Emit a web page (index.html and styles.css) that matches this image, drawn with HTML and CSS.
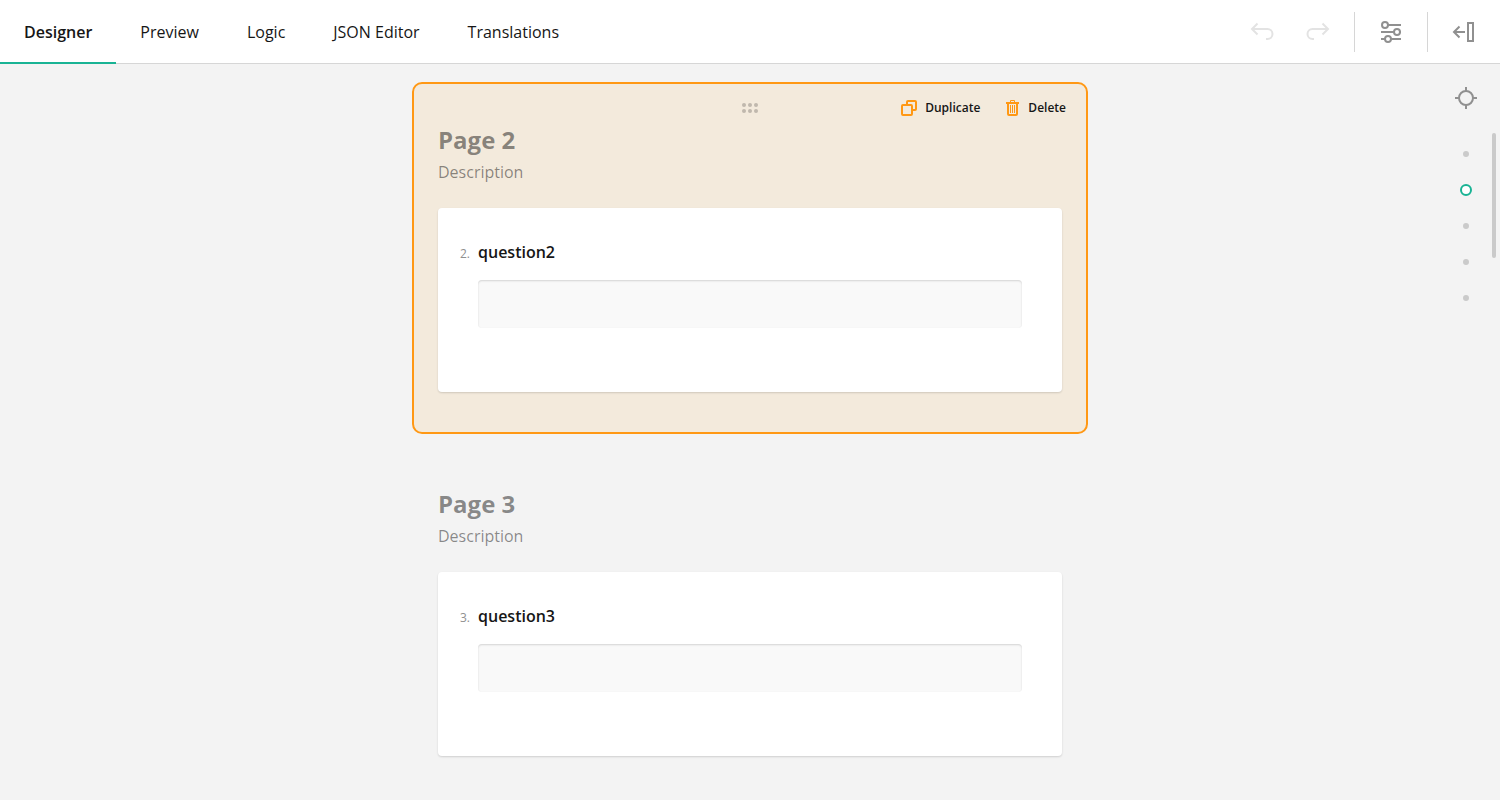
FILE: index.html
```html
<!DOCTYPE html>
<html lang="en">
<head>
<meta charset="utf-8">
<title>Survey Designer</title>
<link rel="stylesheet" href="styles.css">
</head>
<body>
<div class="app">
  <header class="topbar">
    <nav class="tabs">
      <a class="tab tab-active" href="#designer">Designer</a>
      <a class="tab" href="#preview">Preview</a>
      <a class="tab" href="#logic">Logic</a>
      <a class="tab" href="#json">JSON Editor</a>
      <a class="tab" href="#translations">Translations</a>
    </nav>
    <div class="toolbar">
      <button class="tool" type="button" aria-label="Undo" disabled>
        <svg class="icon" viewBox="0 0 24 24"><path d="M7.500 3.500L2 9l5.500 5.500M2 9h15.500a5 5 0 0 1 0 10H16"/></svg>
      </button>
      <button class="tool" type="button" aria-label="Redo" disabled>
        <svg class="icon" viewBox="0 0 24 24"><path d="M16.500 3.500L22 9l-5.500 5.500M22 9H6.500a5 5 0 0 0 0 10H8"/></svg>
      </button>
      <span class="divider"></span>
      <button class="tool" type="button" aria-label="Survey settings">
        <svg class="icon" viewBox="0 0 24 24"><circle cx="6" cy="5" r="3"/><circle cx="18" cy="12" r="3"/><circle cx="9" cy="19" r="3"/><path d="M9 5h13M2 12h13M21 12h1M2 19h4M12 19h10"/></svg>
      </button>
      <span class="divider"></span>
      <button class="tool" type="button" aria-label="Show panel">
        <svg class="icon" viewBox="0 0 24 24"><path d="M7.500 6.500L2 12l5.500 5.500M2 12h11M16 3h5v18h-5z"/></svg>
      </button>
    </div>
  </header>
  <main class="canvas">
    <div class="pages">
      <section class="page page-selected">
        <button class="drag" type="button" aria-label="Drag page">
          <svg class="drag-icon" viewBox="0 0 16 10"><circle cx="2" cy="2" r="2"/><circle cx="8" cy="2" r="2"/><circle cx="14" cy="2" r="2"/><circle cx="2" cy="8" r="2"/><circle cx="8" cy="8" r="2"/><circle cx="14" cy="8" r="2"/></svg>
        </button>
        <div class="actions">
          <button class="action" type="button">
            <svg class="action-icon" viewBox="0 0 16 16"><rect x="1" y="5" width="10" height="10" rx="1"/><path d="M6 5V2a1 1 0 0 1 1-1h7a1 1 0 0 1 1 1v7a1 1 0 0 1-1 1h-3"/></svg>
            Duplicate
          </button>
          <button class="action" type="button">
            <svg class="action-icon" viewBox="0 0 16 16"><path d="M2 3h13M4 3v11a1 1 0 0 0 1 1h7a1 1 0 0 0 1-1V3"/><path class="thin" d="M6.500 2V.500h4V2M6.500 5v8M8.500 5v8M10.500 5v8"/></svg>
            Delete
          </button>
        </div>
        <h2 class="page-title">Page 2</h2>
        <p class="page-description">Description</p>
        <div class="question">
          <span class="number">2.</span>
          <label class="question-title" for="q2">question2</label>
          <input class="answer" id="q2" type="text">
        </div>
      </section>
      <section class="page">
        <h2 class="page-title">Page 3</h2>
        <p class="page-description">Description</p>
        <div class="question">
          <span class="number">3.</span>
          <label class="question-title" for="q3">question3</label>
          <input class="answer" id="q3" type="text">
        </div>
      </section>
    </div>
    <nav class="navigator" aria-label="Pages">
      <button class="target" type="button" aria-label="Go to selected">
        <svg class="icon" viewBox="0 0 24 24"><circle cx="12" cy="12" r="7"/><path d="M12 1v4M12 19v4M1 12h4M19 12h4"/></svg>
      </button>
      <a class="stop" href="#p1" aria-label="Page 1"></a>
      <a class="stop stop-active" href="#p2" aria-label="Page 2"></a>
      <a class="stop" href="#p3" aria-label="Page 3"></a>
      <a class="stop" href="#p4" aria-label="Page 4"></a>
      <a class="stop" href="#p5" aria-label="Page 5"></a>
    </nav>
    <div class="scroll-thumb"></div>
  </main>
</div>
</body>
</html>
```
FILE: styles.css
```css
* { box-sizing: border-box; }
body { margin: 0; font: 16px/24px "Open Sans", sans-serif; color: #161616; }
button { padding: 0; border: 0; background: none; font: inherit; color: inherit; cursor: pointer; }
svg { display: block; fill: none; stroke: currentColor; stroke-width: 2; }
.app { display: flex; flex-direction: column; height: 100vh; background: #f3f3f3; }
.topbar { display: flex; justify-content: space-between; height: 64px; flex: none; background: #fff; box-shadow: inset 0 -1px #d6d6d6; }
.tabs { display: flex; }
.tab { padding: 20px 24px 18px; color: inherit; text-decoration: none; border-bottom: 2px solid transparent; }
.tab-active { font-weight: 600; border-bottom-color: #19b394; }
.toolbar { display: flex; align-items: center; padding-right: 8px; }
.tool { padding: 16px; color: #909090; }
.tool:disabled { color: #e3e3e3; }
.icon { width: 24px; height: 24px; }
.divider { width: 1px; height: 40px; margin: 0 8px; background: #d6d6d6; }
.canvas { position: relative; flex: 1; min-height: 0; overflow: hidden; }
.pages { display: flex; flex-direction: column; gap: 12px; width: 100%; max-width: 676px; margin: 0 auto; padding-top: 18px; }
.page { position: relative; padding: 40px 24px; border: 2px solid transparent; border-radius: 10px; }
.page-selected { background: #f3eadc; border-color: #ff9814; }
.drag { position: absolute; top: 19px; left: 50%; transform: translateX(-50%); }
.drag-icon { width: 16px; height: 10px; fill: #c0b8ad; stroke: none; }
.actions { position: absolute; top: 12px; right: 20px; display: flex; gap: 24px; }
.action { display: flex; align-items: center; gap: 8px; font-size: 12px; font-weight: 600; line-height: 24px; }
.action-icon { width: 16px; height: 16px; color: #ff9814; }
.thin { stroke-width: 1; }
.page-title { margin: 0; font-size: 24px; line-height: 32px; font-weight: 700; color: rgba(0, 0, 0, 0.45); }
.page-description { margin: 4px 0 24px; color: rgba(0, 0, 0, 0.45); }
.question { display: grid; grid-template-columns: 32px 1fr; align-items: baseline; column-gap: 8px; row-gap: 16px; padding: 32px 40px 64px 0; border-radius: 4px; background: #fff; box-shadow: 0 1px 2px rgba(0, 0, 0, 0.15); }
.number { font-size: 12px; line-height: 16px; text-align: right; color: #909090; }
.question-title { font-weight: 600; }
.answer { grid-column: 2; width: 100%; height: 48px; padding: 12px 16px; border: 0; border-radius: 4px; background: #f9f9f9; box-shadow: inset 0 1px 2px rgba(0, 0, 0, 0.15); font: inherit; }
.navigator { position: absolute; top: 22px; right: 22px; display: flex; flex-direction: column; align-items: center; }
.target { margin-bottom: 26px; color: #909090; }
.stop { display: flex; align-items: center; justify-content: center; width: 12px; height: 36px; }
.stop::before { content: ""; flex: none; box-sizing: border-box; width: 6px; height: 6px; border-radius: 50%; background: #cacaca; }
.stop-active::before { width: 12px; height: 12px; border: 2px solid #19b394; background: #fff; }
.scroll-thumb { position: absolute; top: 69px; right: 4px; width: 4px; height: 125px; border-radius: 2px; background: #cacaca; }
```
